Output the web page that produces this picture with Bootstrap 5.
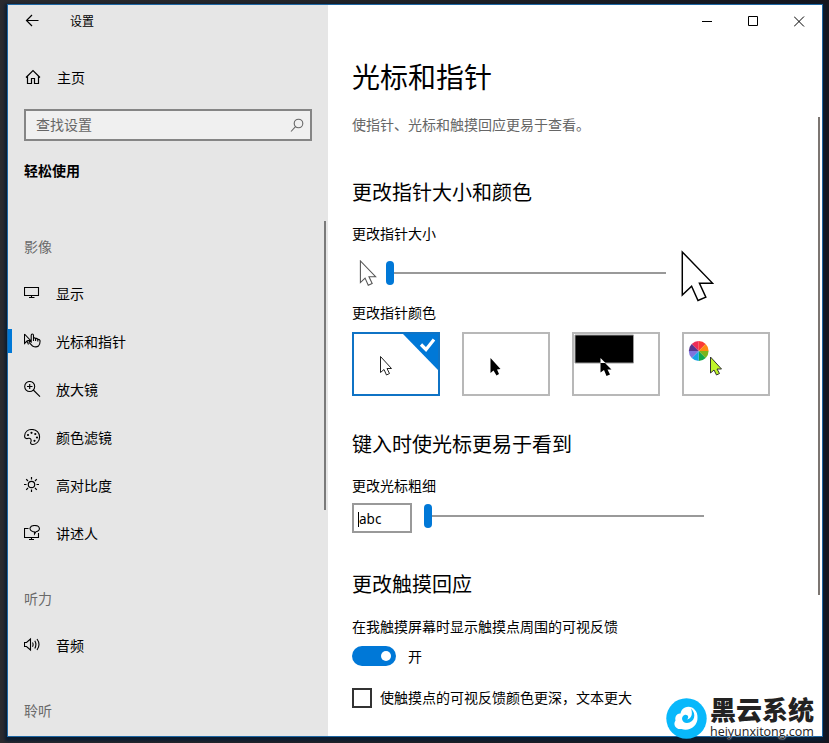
<!DOCTYPE html>
<html lang="zh-CN">
<head>
<meta charset="utf-8">
<meta name="viewport" content="width=device-width, initial-scale=1">
<title>设置</title>
<link href="https://cdn.jsdelivr.net/npm/bootstrap@5.3.0/dist/css/bootstrap.min.css" rel="stylesheet">
<style>
  html, body { height: 100%; }
  body { background: linear-gradient(90deg, #2b2b2f, #212226 50%, #15161f); padding: 4px 6px 6px 7px; font: 14px/20px "Noto Sans CJK SC", sans-serif; color: #000; overflow: hidden; }
  .window { width: 816px; height: 733px; border: 1px solid #1d66a3; background: #fff; box-shadow: 0 2px 3px 2px #0a1c30; }
  .sidebar { width: 320px; background: #e6e6e6; }
  .titlebar { height: 32px; font-size: 12px; padding-left: 17px; }
  .titlebar span { margin-left: 30px; }
  .side-row { height: 40px; padding-left: 16px; padding-bottom: 2px; }
  .side-item { height: 48px; padding-left: 16px; gap: 15px; }
  .side-item.active::before { content: ""; width: 4px; height: 24px; background: #0078d7; margin-left: -16px; margin-right: -3px; }
  .side-item svg, .side-home svg { width: 17px; height: 17px; flex: none; }
  .side-home { gap: 16px; margin-top: 21px; }
  .search { margin: 11px 16px 0; height: 32px; border: 2px solid #858585; background: #f0f0f0; color: #666; padding: 0 5px 3px 10px; }
  .search svg { margin-top: 2px; }
  .side-head { margin-top: 10px; margin-bottom: 36px; }
  .side-cat { color: #6a6a6a; margin-bottom: 2px; }
  .side-gap { margin-top: 22px; }
  .main { padding-left: 24px; }
  .caption-bar { height: 32px; padding-right: 17px; gap: 35px; }
  h1 { font-size: 28px; line-height: 40px; margin: 19px 0 0; font-weight: 400; }
  h2 { font-size: 20px; line-height: 30px; margin: 0; font-weight: 400; }
  .desc { color: #666; margin: 18px 0 43px; }
  .track { height: 2px; background: #999; }
  .thumb { width: 8px; height: 24px; border-radius: 4px; background: #0078d7; flex: none; }
  .size-label { margin-top: 16px; }
  .size-row { height: 50px; margin-top: 5px; }
  .small-ptr { margin-left: 7px; margin-right: 9px; }
  .size-track { width: 272px; }
  .big-ptr { margin-left: 14px; margin-top: 5px; }
  .color-label { margin-top: 4px; }
  .swatches { gap: 22px; margin-top: 10px; }
  .swatch { width: 88px; height: 64px; border: 2px solid #b8b8b8; }
  .swatch.chosen { border-color: #0f73c5; }
  .swatch svg { display: block; width: 84px; height: 60px; }
  .sec-type { margin-top: 33px; }
  .width-label { margin-top: 16px; }
  .width-row { margin-top: 8px; }
  .abc { width: 60px; height: 30px; border: 2px solid #999; padding: 2px 0 0 4px; font-family: "Noto Sans", sans-serif; font-size: 13.5px; }
  .caret { width: 1px; height: 15px; background: #000; }
  .width-slider { height: 26px; margin-left: 12px; }
  .width-track { width: 272px; }
  .sec-touch { margin-top: 36px; }
  .touch-label { margin-top: 17px; }
  .toggle-row { margin-top: 10px; gap: 12px; }
  .toggle { width: 44px; height: 20px; border-radius: 10px; background: #0078d7; padding-right: 5px; }
  .knob { width: 10px; height: 10px; border-radius: 50%; background: #fff; }
  .check-row { margin-top: 22px; gap: 8px; }
  .check-row .check-text { margin-top: -3px; }
  .check-box { width: 20px; height: 20px; border: 2px solid #333; }
  .bar-side { left: 316px; top: 216px; width: 2px; height: 289px; background: #7a7a7a; }
  .bar-main { right: 2px; top: 112px; width: 2px; height: 478px; background: #7c7672; }
  .brand { left: 666px; top: 697px; width: 150px; height: 42px; gap: 3px; color: #222; }
  .brand-name { font-size: 26px; font-weight: 900; line-height: 24px; height: 28px; }
  .brand-url { font: 12.5px/14px "Open Sans", sans-serif; white-space: nowrap; text-shadow: 0 0 1px #fff, 0 0 2px #fff; }
</style>
<script src="https://cdn.jsdelivr.net/npm/bootstrap@5.3.0/dist/js/bootstrap.bundle.min.js"></script>
</head>
<body>
<svg class="d-none">
  <symbol id="arrow" viewBox="0 0 32 50" overflow="visible"><path d="M1 1V45L10.500 36L17 50.500L25 47L18.500 33H32Z"/></symbol>
</svg>
<div class="window d-flex position-relative">
  <aside class="sidebar flex-shrink-0">
    <div class="titlebar d-flex align-items-center">
      <svg width="15" height="14" viewBox="0 0 15 14" fill="none" stroke="#000" stroke-width="1.200"><path d="M1.500 6.500H13.500M7 1L1.500 6.500L7 12"/></svg>
      <span>设置</span>
    </div>
    <div class="side-row side-home d-flex align-items-center">
      <svg viewBox="0 0 17 17" fill="none" stroke="#000" stroke-width="1.200"><path d="M2 8.500L9 1.500L16 8.500M3.500 7V14.500H7.500V9.500H10.500V14.500H14.500V7"/></svg>
      <span>主页</span>
    </div>
    <div class="search d-flex align-items-center justify-content-between">
      <span>查找设置</span>
      <svg width="16" height="16" viewBox="0 0 16 16" fill="none" stroke="#666" stroke-width="1.100"><circle cx="9.500" cy="6.500" r="4.300"/><path d="M6.500 9.600L2 14.500"/></svg>
    </div>
    <div class="side-row side-head d-flex align-items-center fw-bold">轻松使用</div>
    <div class="side-row side-cat d-flex align-items-center">影像</div>
    <div class="side-item d-flex align-items-center">
      <svg viewBox="0 0 17 17" fill="none" stroke="#000" stroke-width="1.100"><path d="M.5 2.500H14.500V10.500H.5ZM7.500 10.500V12.500M5 12.500H10.500"/></svg>
      <span>显示</span>
    </div>
    <div class="side-item active d-flex align-items-center">
      <svg viewBox="0 0 17 17" fill="none" stroke="#000" stroke-width="1.100"><path d="M.5 1V10.500L3 8L4.500 11.500M.5 1L6.500 7.500H3.500M9.500 8V2.500Q9.500 1 8.300 1Q7.200 1 7.200 2.500V9L5.800 8.200Q4.500 8.500 5.500 9.800L8.500 13Q12 14.800 14.500 13Q16.300 11 16 7.500Q15.500 6 13.800 6.500V8.500M13.800 6.500Q13 5 11.600 5.500V8M11.600 5.500Q11 4.500 9.500 5"/></svg>
      <span>光标和指针</span>
    </div>
    <div class="side-item d-flex align-items-center">
      <svg viewBox="0 0 17 17" fill="none" stroke="#000" stroke-width="1.100"><circle cx="5.700" cy="5.500" r="5"/><path d="M9.300 9L16 15.700M3 5.500H8.500M5.700 3V8"/></svg>
      <span>放大镜</span>
    </div>
    <div class="side-item d-flex align-items-center">
      <svg viewBox="0 0 17 17" fill="none" stroke="#000" stroke-width="1.100"><path d="M.6 7C.8 3 4 .5 8 .5C12.500 .5 15.600 3.800 15.600 8C15.600 12 12.500 15.500 9 15.500C6.500 15.500 6.200 13.800 7 12.500C7.500 10.500 6.500 8.800 4.500 9.300C2.500 10 .5 9.500 .6 7Z"/><g fill="#000" stroke="none"><circle cx="4" cy="6" r="1.100"/><circle cx="7.500" cy="3.800" r="1.100"/><circle cx="11.300" cy="5" r="1.100"/><circle cx="13" cy="8.500" r="1.100"/><circle cx="10.500" cy="11.800" r="1.100"/></g></svg>
      <span>颜色滤镜</span>
    </div>
    <div class="side-item d-flex align-items-center">
      <svg viewBox="0 0 17 17" fill="none" stroke="#000" stroke-width="1.200"><circle cx="7.500" cy="7.500" r="3.200"/><path d="M7.500 0V2.500M7.500 12.500V15M0 7.500H2.500M12.500 7.500H15M2.200 2.200L4 4M11 11L12.800 12.800M12.800 2.200L11 4M4 11L2.200 12.800"/></svg>
      <span>高对比度</span>
    </div>
    <div class="side-item d-flex align-items-center">
      <svg viewBox="0 0 17 17" fill="none" stroke="#000" stroke-width="1.100"><path d="M4.500 3.500H.5V12.500H14.500V8M7.500 12.500V14.500M5 14.500H10"/><path d="M8.500 6.500C4.500 5 5.500 .5 10.500 .5C16.500 .5 17 6 12 6.800L10.500 9V7Z"/></svg>
      <span>讲述人</span>
    </div>
    <div class="side-row side-cat side-gap d-flex align-items-center">听力</div>
    <div class="side-item d-flex align-items-center">
      <svg viewBox="0 0 17 17" fill="none" stroke="#000" stroke-width="1.100"><path d="M.5 5.500H2.500L6.500 2V13L2.500 9.500H.5ZM8.500 5.500Q9.700 7.500 8.500 9.700M10.800 3.700Q13 7.500 10.800 11.500M13 2Q17 7.500 13 13"/></svg>
      <span>音频</span>
    </div>
    <div class="side-row side-cat side-gap d-flex align-items-center">聆听</div>
  </aside>

  <main class="main flex-grow-1">
    <div class="caption-bar d-flex align-items-center justify-content-end">
      <svg width="11" height="11" viewBox="0 0 11 11" stroke="#000"><path d="M0 5.500H10"/></svg>
      <svg width="11" height="11" viewBox="0 0 11 11" stroke="#000" fill="none"><path d="M.5 .5H9.500V9.500H.5Z"/></svg>
      <svg width="11" height="11" viewBox="0 0 11 11" stroke="#000"><path d="M0 .5L10 10.500M10 .5L0 10.500"/></svg>
    </div>
    <h1>光标和指针</h1>
    <div class="desc">使指针、光标和触摸回应更易于查看。</div>

    <h2>更改指针大小和颜色</h2>
    <div class="size-label">更改指针大小</div>
    <div class="size-row d-flex align-items-center">
      <svg class="small-ptr" width="18" height="26" viewBox="-1 -1 35 53" fill="#fff" stroke="#555" stroke-width="2.200"><use href="#arrow" width="32" height="50"/></svg>
      <span class="thumb"></span>
      <span class="track size-track"></span>
      <svg class="big-ptr" width="34" height="52" viewBox="-1 -1 34 53" fill="#fff" stroke="#000" stroke-width="1.500"><use href="#arrow" width="32" height="50"/></svg>
    </div>
    <div class="color-label">更改指针颜色</div>
    <div class="swatches d-flex">
      <div class="swatch chosen"><svg viewBox="0 0 84 60"><path d="M49 0H84V36Z" fill="#0078d7"/><path d="M67 10.500L72 15.500L80 5.500" fill="none" stroke="#fff" stroke-width="3.200"/><path d="M26.500 22.500V38.500L30 35.500L32.500 41L35.500 39.500L33 34.500H37.500Z" fill="#fff" stroke="#222"/></svg></div>
      <div class="swatch"><svg viewBox="0 0 84 60"><path d="M26.500 24V39L29.500 36.500L32.500 41.500L35 40L33 35.500L36.500 35Z"/></svg></div>
      <div class="swatch"><svg viewBox="0 0 84 60"><path d="M1 1H59.500V29H1Z" fill="#000" stroke="#999"/><path d="M26.500 29V38.500L30 36L32.500 42L36 40.500L33.500 35.500H37.500L31 29Z"/><path d="M26.500 29V24L31.500 29Z" fill="#fff"/></svg></div>
      <div class="swatch"><svg viewBox="0 0 84 60">
        <g transform="translate(14.700 17)"><path fill="#ee2d58" d="M0 0L-7 -7A9.900 9.900 0 0 1 0 -9.900Z"/><path fill="#fb3a35" d="M0 0V-9.900A9.900 9.900 0 0 1 7 -7Z"/><path fill="#fd8a12" d="M0 0L7 -7A9.900 9.900 0 0 1 9.900 0Z"/><path fill="#79b51d" d="M0 0H9.900A9.900 9.900 0 0 1 7 7Z"/><path fill="#12a94c" d="M0 0L7 7A9.900 9.900 0 0 1 0 9.900Z"/><path fill="#18a4e8" d="M0 0V9.900A9.900 9.900 0 0 1 -7 7Z"/><path fill="#8074dc" d="M0 0L-7 7A9.900 9.900 0 0 1 -9.900 0Z"/><path fill="#57358e" d="M0 0H-9.900A9.900 9.900 0 0 1 -7 -7Z"/></g>
        <path d="M26.500 23V39L30 36L32.500 41L35.500 39.500L33 35H37.500Z" fill="#bff52a" stroke="#333"/></svg></div>
    </div>

    <h2 class="sec-type">键入时使光标更易于看到</h2>
    <div class="width-label">更改光标粗细</div>
    <div class="d-flex width-row">
      <div class="abc d-flex align-items-center"><span class="caret"></span><span>abc</span></div>
      <div class="d-flex align-items-center width-slider"><span class="thumb"></span><span class="track width-track"></span></div>
    </div>

    <h2 class="sec-touch">更改触摸回应</h2>
    <div class="touch-label">在我触摸屏幕时显示触摸点周围的可视反馈</div>
    <div class="d-flex align-items-center toggle-row">
      <span class="toggle d-flex align-items-center justify-content-end"><span class="knob"></span></span><span>开</span>
    </div>
    <div class="d-flex align-items-center check-row">
      <span class="check-box"></span><span class="check-text">使触摸点的可视反馈颜色更深，文本更大</span>
    </div>
  </main>
  <span class="bar-side position-absolute"></span>
  <span class="bar-main position-absolute"></span>
</div>
<div class="brand position-absolute d-flex align-items-center">
  <svg class="flex-shrink-0" width="41" height="41" viewBox="0 0 41 41"><circle cx="20.500" cy="20.500" r="20.200" fill="#08b8fb"/><path d="M19 9.500C25 6.500 32 12 31.500 19.500C32 28 23 34 15.500 31C10 32 6.500 26.500 9.500 22.500C8.500 18 11.500 15 14.500 15.500C15 12.500 16.500 10.500 19 9.500Z" fill="#fff"/><path d="M25 10.500C31 16 28.500 24.500 21 25C15.500 25 14.500 18.500 18.500 17C22 16 23.500 20 21 21.500C25.500 20.500 27 16 25 10.500Z" fill="#08b8fb"/></svg>
  <div><div class="brand-name">黑云系统</div><div class="brand-url">heiyunxitong.com</div></div>
</div>
</body>
</html>
